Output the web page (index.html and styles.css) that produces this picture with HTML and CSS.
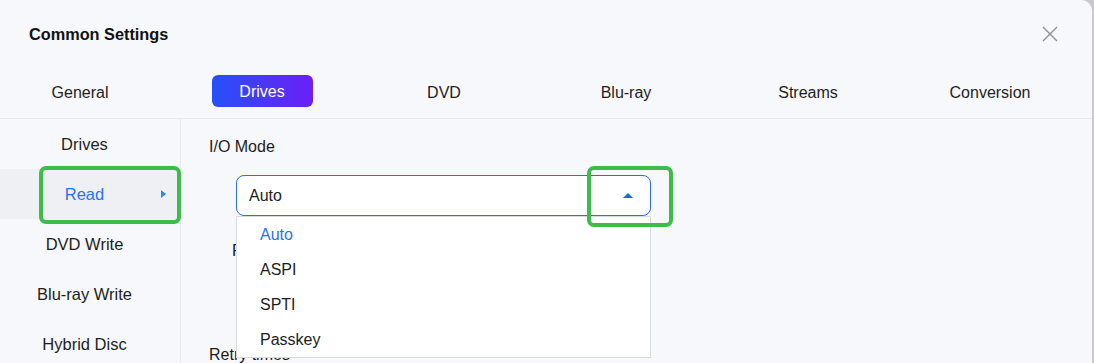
FILE: index.html
```html
<!DOCTYPE html>
<html>

<head>
  <meta charset="utf-8" />
  <title>Common Settings</title>
  <link rel="stylesheet" href="styles.css">
</head>

<body>
  <div class="dialog">
    <div class="dialog-head">
      <span class="dialog-title">Common Settings</span>
      <a class="close-button">
        <svg width="16" height="16" viewBox="0 0 16 16">
          <path d="M1 1 L15 15 M15 1 L1 15" stroke="#8b8f97" stroke-width="1.4" fill="none" />
        </svg>
      </a>
    </div>

    <div class="tab-row">
      <a class="tab">General</a>
      <a class="tab"><span class="tab-pill">Drives</span></a>
      <a class="tab">DVD</a>
      <a class="tab">Blu-ray</a>
      <a class="tab">Streams</a>
      <a class="tab">Conversion</a>
    </div>

    <div class="dialog-body">
      <div class="side-menu">
        <a class="side-item">Drives</a>
        <a class="side-item active">Read<span class="side-arrow"></span></a>
        <a class="side-item">DVD Write</a>
        <a class="side-item">Blu-ray Write</a>
        <a class="side-item">Hybrid Disc</a>
      </div>

      <div class="content">
        <div class="field-label">I/O Mode</div>
        <div class="select-wrap">
          <div class="select-box">
            <span>Auto</span>
            <span class="select-arrow"></span>
          </div>
          <div class="select-list">
            <div class="select-option selected">Auto</div>
            <div class="select-option">ASPI</div>
            <div class="select-option">SPTI</div>
            <div class="select-option">Passkey</div>
          </div>
        </div>
        <div class="field-label sub-label">Read speed</div>
        <div class="field-label retry-label">Retry times</div>
      </div>
    </div>

    <!-- annotation marks -->
    <div class="mark mark-read"></div>
    <div class="mark mark-arrow"></div>
  </div>
</body>

</html>
```

FILE: styles.css
```css
body {
  padding: 0;
  margin: 0;
  background-color: #c8c9cd;
  font-family: "Liberation Sans", Arial, sans-serif;
  color: #1c1c1f;
  overflow: hidden;
}

.dialog {
  position: relative;
  width: 1092px;
  height: 363px;
  background-color: #f7f8fc;
  border-top-right-radius: 11px;
  overflow: hidden;
}

.dialog-head {
  height: 66px;
  display: flex;
  align-items: center;
  justify-content: space-between;
  padding-left: 29px;
  padding-right: 34px;
  box-sizing: border-box;
}

.dialog-title {
  font-size: 16.3px;
  font-weight: bold;
  color: #111111;
  margin-top: 3px;
}

.close-button {
  display: flex;
  margin-top: 1px;
}

.tab-row {
  display: grid;
  grid-template-columns: repeat(6, 182px);
  margin-left: -11px;
  margin-right: -20px;
  padding: 9px 0 11px 0;
  border-bottom: 1px solid #e7e9ed;
}

.tab {
  height: 32px;
  display: flex;
  align-items: center;
  justify-content: center;
  padding-top: 3px;
  box-sizing: border-box;
  font-size: 16px;
  color: #1e1e22;
}

.tab-pill {
  width: 101px;
  height: 32px;
  margin-top: -3px;
  padding-top: 2px;
  box-sizing: border-box;
  border-radius: 6px;
  display: flex;
  align-items: center;
  justify-content: center;
  color: #ffffff;
  background: linear-gradient(90deg, #2750f8, #6b1ff6);
}

.dialog-body {
  display: flex;
  height: 260px;
}

.side-menu {
  width: 181px;
  border-right: 1px solid #e7e9ed;
  box-sizing: border-box;
  flex-shrink: 0;
}

.side-item {
  position: relative;
  height: 50px;
  display: flex;
  align-items: center;
  justify-content: center;
  padding-right: 11px;
  font-size: 16.5px;
  color: #1e1e22;
}

.side-item.active {
  background-color: #eff0f4;
  color: #2b6ff2;
}

.side-arrow {
  position: absolute;
  left: 161px;
  top: 21px;
  width: 0;
  height: 0;
  border-top: 4px solid transparent;
  border-bottom: 4px solid transparent;
  border-left: 5px solid #1e8ef6;
}

.content {
  padding-left: 28px;
  padding-top: 18px;
  flex: 1;
}

.field-label {
  font-size: 16px;
  line-height: 20px;
}

.select-wrap {
  position: relative;
  width: 415px;
  margin-left: 27px;
  margin-top: 18px;
}

.select-box {
  height: 41px;
  box-sizing: border-box;
  border: 1px solid #2d6cf0;
  border-radius: 8px;
  background-color: #ffffff;
  display: flex;
  align-items: center;
  justify-content: space-between;
  padding-left: 12px;
  padding-right: 17px;
  font-size: 16px;
}

.select-arrow {
  width: 0;
  height: 0;
  border-left: 5px solid transparent;
  border-right: 5px solid transparent;
  border-bottom: 5px solid #1f63ee;
  margin-top: -1px;
}

.select-list {
  position: absolute;
  top: 41px;
  left: 0;
  right: 0;
  z-index: 2;
  background-color: #ffffff;
  border: 1px solid #dadbde;
}

.select-option {
  height: 35px;
  display: flex;
  align-items: center;
  padding-left: 23px;
  font-size: 16px;
}

.select-option.selected {
  color: #2b6ff2;
}

.sub-label {
  margin-top: 25px;
  margin-left: 23px;
}

.retry-label {
  margin-top: 84px;
}

.mark {
  position: absolute;
  border: 4px solid #3dbb4b;
  border-radius: 7px;
  box-sizing: border-box;
  z-index: 3;
}

.mark-read {
  left: 39px;
  top: 166px;
  width: 142px;
  height: 58px;
}

.mark-arrow {
  left: 587px;
  top: 166px;
  width: 86px;
  height: 61px;
}
```
